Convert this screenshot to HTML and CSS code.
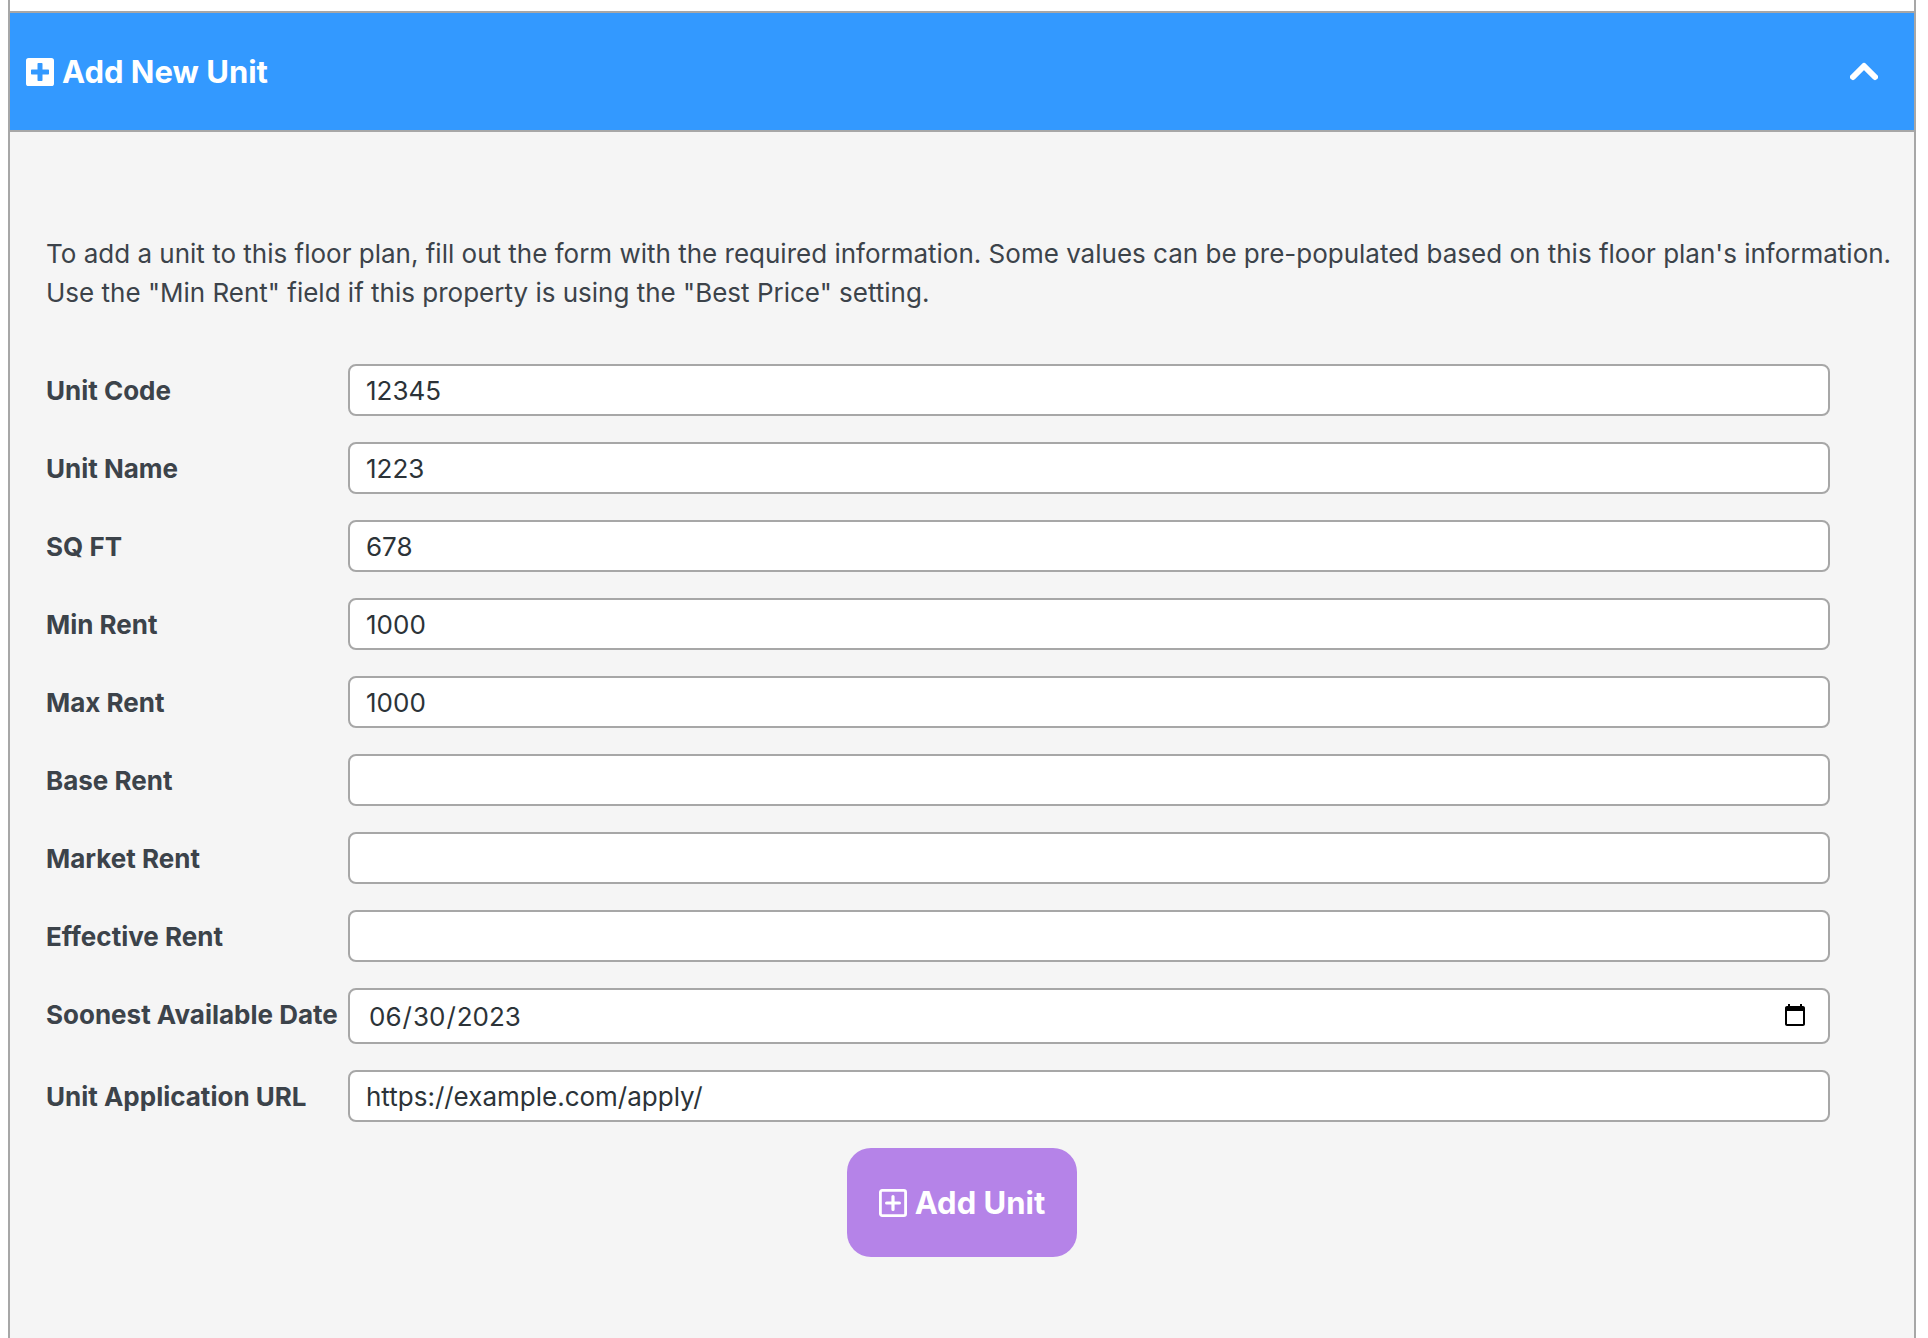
FILE: index.html
```html
<!DOCTYPE html>
<html lang="en-US">
<head>
    <meta charset="UTF-8">
    <meta name="viewport" content="width=device-width, initial-scale=1.0">
    <title>Add New Unit</title>
    <link rel="stylesheet" href="styles.css">
</head>
<body>
    <main class="accordion">
        <!-- Accordion header -->
        <button type="button" class="accordion-header" id="add-unit-toggle" aria-expanded="true" aria-controls="add-unit-panel">
            <span class="title">
                <svg class="icon" viewBox="0 0 448 448" aria-hidden="true">
                    <path fill="currentColor" fill-rule="evenodd" d="M42 0h364a42 42 0 0 1 42 42v364a42 42 0 0 1-42 42H42a42 42 0 0 1-42-42V42A42 42 0 0 1 42 0zM368 252v-56q0-12-12-12h-92V92q0-12-12-12h-56q-12 0-12 12v92H92q-12 0-12 12v56q0 12 12 12h92v92q0 12 12 12h56q12 0 12-12v-92h92q12 0 12-12z"/>
                </svg>
                Add New Unit
            </span>
            <svg class="icon" viewBox="0 0 28 28" aria-hidden="true">
                <path fill="none" stroke="currentColor" stroke-width="6" stroke-linecap="round" stroke-linejoin="round" d="M3 19L14 8L25 19"/>
            </svg>
        </button>

        <!-- Accordion content -->
        <section class="accordion-panel" id="add-unit-panel" aria-labelledby="add-unit-toggle">
            <p class="intro">To add a unit to this floor plan, fill out the form with the required information. Some values can be pre-populated based on this floor plan's information. Use the "Min Rent" field if this property is using the "Best Price" setting.</p>

            <form class="unit-form" id="unit-form">
                <div class="field">
                    <label for="unit-code">Unit Code</label>
                    <input type="text" id="unit-code" value="12345">
                </div>
                <div class="field">
                    <label for="unit-name">Unit Name</label>
                    <input type="text" id="unit-name" value="1223">
                </div>
                <div class="field">
                    <label for="sqft">SQ FT</label>
                    <input type="text" id="sqft" value="678">
                </div>
                <div class="field">
                    <label for="min-rent">Min Rent</label>
                    <input type="text" id="min-rent" value="1000">
                </div>
                <div class="field">
                    <label for="max-rent">Max Rent</label>
                    <input type="text" id="max-rent" value="1000">
                </div>
                <div class="field">
                    <label for="base-rent">Base Rent</label>
                    <input type="text" id="base-rent">
                </div>
                <div class="field">
                    <label for="market-rent">Market Rent</label>
                    <input type="text" id="market-rent">
                </div>
                <div class="field">
                    <label for="effective-rent">Effective Rent</label>
                    <input type="text" id="effective-rent">
                </div>
                <div class="field">
                    <label for="available-date">Soonest Available Date</label>
                    <input type="date" id="available-date" value="2023-06-30">
                </div>
                <div class="field">
                    <label for="application-url">Unit Application URL</label>
                    <input type="url" id="application-url" value="https://example.com/apply/">
                </div>
            </form>

            <button type="submit" class="add-unit" form="unit-form">
                <svg class="icon" viewBox="0 0 28 28" aria-hidden="true">
                    <rect x="1.4" y="1.4" width="25.2" height="25.2" rx="1.8" fill="none" stroke="currentColor" stroke-width="2.8"/>
                    <path fill="none" stroke="currentColor" stroke-width="3.2" stroke-linecap="round" d="M14 7.6v12.8M7.6 14h12.8"/>
                </svg>
                Add Unit
            </button>
        </section>
    </main>
</body>
</html>
```

FILE: styles.css
```css
* {
    box-sizing: border-box;
}

body {
    margin: 0;
    background-color: #ffffff;
    color: #3c434a;
    font-family: Inter, "Liberation Sans", sans-serif;
    font-size: 26px;
    line-height: 39px;
}

.accordion {
    display: flex;
    flex-direction: column;
    min-height: 100vh;
    margin: 0 12px 0 8px;
    padding-top: 11px;
    border: 2px solid #a7a7a7;
    border-width: 0 2px;
}

.accordion-header {
    display: flex;
    justify-content: space-between;
    align-items: center;
    width: 100%;
    padding: 38px 36px 38px 16px;
    border: 2px solid #a7a7a7;
    border-width: 2px 0;
    background-color: #3399ff;
    color: #ffffff;
    font: inherit;
    font-size: 31px;
    font-weight: 700;
    line-height: 41px;
    cursor: pointer;
}

.title {
    display: flex;
    align-items: center;
    gap: 8px;
}

.icon {
    width: 28px;
    height: 28px;
    flex: none;
}

.accordion-panel {
    flex: 1;
    padding: 102px 36px 80px;
    background-color: #f5f5f5;
}

/* The intro runs wider than the form below it */
.intro {
    margin: 0 -32px 52px 0;
}

.unit-form {
    display: flex;
    flex-direction: column;
    gap: 26px;
    margin-bottom: 26px;
    padding-right: 48px;
}

.field {
    display: flex;
    align-items: flex-start;
}

.field label {
    width: 302px;
    flex: none;
    padding-top: 7px;
    font-weight: 700;
    white-space: nowrap;
}

.field input {
    flex: 1;
    min-width: 0;
    height: 52px;
    padding: 0 16px;
    border: 2px solid #a7a7a7;
    border-radius: 8px;
    background-color: #ffffff;
    color: #2c3338;
    font: inherit;
}

.field input[type="date"] {
    height: 56px;
    padding: 0 18px;
}

.add-unit {
    display: flex;
    align-items: center;
    gap: 8px;
    margin: 0 auto;
    padding: 34px 32px;
    border: none;
    border-radius: 24px;
    background-color: #b583e8;
    color: #ffffff;
    font: inherit;
    font-size: 31px;
    font-weight: 700;
    line-height: 41px;
    cursor: pointer;
}
```
